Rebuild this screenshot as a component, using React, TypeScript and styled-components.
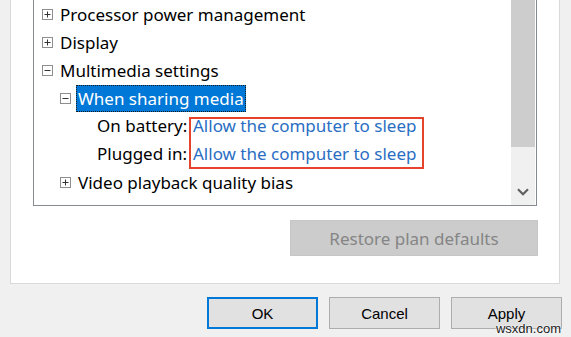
import React from "react";
import styled, { createGlobalStyle } from "styled-components";

const Global = createGlobalStyle`
  html, body { margin: 0; padding: 0; background: #f0f0f0; }
  body { width: 571px; height: 337px; overflow: hidden; font-family: "Noto Sans", "Open Sans", sans-serif; }
`;

const Page = styled.div`
  position: relative;
  width: 571px;
  height: 337px;
  display: flex;
  flex-direction: column;
`;

const Panel = styled.div`
  margin-left: 10px;
  width: 550px;
  height: 284px;
  box-sizing: border-box;
  background: #fff;
  border: 1px solid #d9d9d9;
  border-top: none;
  padding: 0 22px;
  display: flex;
  flex-direction: column;
`;

const TreeBox = styled.div`
  height: 206px;
  box-sizing: border-box;
  border: 1px solid #868a91;
  border-top: none;
  display: flex;
  background: #fff;
`;

const List = styled.div`
  position: relative;
  flex: 1;
  overflow: hidden;
  padding-left: 8px;
`;

const Row = styled.div<{ $level: number }>`
  height: 28px;
  display: flex;
  align-items: center;
  padding-left: ${(p) => p.$level * 18}px;
  font-size: 17px;
  line-height: 28px;
  color: #000;
  white-space: nowrap;
`;

const ToggleBox = styled.svg`
  width: 11px;
  height: 11px;
  flex: none;
  margin-right: 5px;
`;

const Spacer = styled.span`
  width: 16px;
  flex: none;
`;

const Label = styled.span<{ $selected?: boolean }>`
  display: inline-block;
  height: 27px;
  line-height: 27px;
  padding: 0 2px;
  box-sizing: border-box;
  background: ${(p) => (p.$selected ? "#0078d7" : "transparent")};
  color: ${(p) => (p.$selected ? "#fff" : "#000")};
  outline: ${(p) => (p.$selected ? "1px dotted #1a1a1a" : "none")};
  outline-offset: -1px;
`;

const SettingName = styled.span`
  padding-left: 3px;
  width: 96px;
  flex: none;
`;

const LinkValue = styled.span`
  color: #2a6ec3;
`;

const Annotation = styled.div`
  position: absolute;
  left: 155px;
  top: 117px;
  width: 235px;
  height: 52px;
  box-sizing: border-box;
  border: 2px solid #e5432b;
  pointer-events: none;
`;

const ScrollBar = styled.div`
  width: 24px;
  margin-right: 1px;
  display: flex;
  flex-direction: column;
  background: #f0f0f0;
`;

const Thumb = styled.div`
  height: 147px;
  background: #cdcdcd;
`;

const Track = styled.div`
  flex: 1;
  display: flex;
  align-items: flex-end;
  justify-content: center;
  padding-bottom: 9px;
`;

const RestoreRow = styled.div`
  display: flex;
  justify-content: flex-end;
  margin-top: 14px;
  margin-right: -1px;
`;

const RestoreButton = styled.div`
  width: 248px;
  height: 36px;
  box-sizing: border-box;
  background: #cccccc;
  border: 1px solid #c6c6c6;
  color: #858585;
  font-size: 17px;
  display: flex;
  align-items: center;
  justify-content: center;
`;

const ButtonBar = styled.div`
  display: flex;
  justify-content: flex-end;
  gap: 11px;
  margin-top: 13px;
  padding-right: 9px;
`;

const DlgButton = styled.div<{ $default?: boolean }>`
  width: 111px;
  height: 32px;
  box-sizing: border-box;
  background: #e1e1e1;
  border: ${(p) => (p.$default ? "2px solid #0078d7" : "1px solid #adadad")};
  font-family: "Liberation Sans", Arial, sans-serif;
  font-size: 15px;
  color: #000;
  display: flex;
  align-items: center;
  justify-content: center;
`;

const Watermark = styled.div`
  position: absolute;
  right: 10px;
  bottom: 1px;
  font-family: "Liberation Sans", Arial, sans-serif;
  font-size: 13px;
  color: #1a1a1a;
  text-shadow: 0 0 2px #fff, 0 0 2px #fff;
`;

const Toggle = ({ open }: { open: boolean }) => (
  <ToggleBox viewBox="0 0 11 11">
    <rect x="0.5" y="0.5" width="10" height="10" fill="#fff" stroke="#8e8e8e" />
    <path d="M2.5 5.5H8.5" stroke="#333" strokeWidth="1" />
    {!open && <path d="M5.5 2.5V8.5" stroke="#333" strokeWidth="1" />}
  </ToggleBox>
);

type Node =
  | { kind: "group"; level: number; text: string; open: boolean; selected?: boolean }
  | { kind: "setting"; level: number; name: string; value: string };

const nodes: Node[] = [
  { kind: "group", level: 0, text: "Processor power management", open: false },
  { kind: "group", level: 0, text: "Display", open: false },
  { kind: "group", level: 0, text: "Multimedia settings", open: true },
  { kind: "group", level: 1, text: "When sharing media", open: true, selected: true },
  { kind: "setting", level: 2, name: "On battery:", value: "Allow the computer to sleep" },
  { kind: "setting", level: 2, name: "Plugged in:", value: "Allow the computer to sleep" },
  { kind: "group", level: 1, text: "Video playback quality bias", open: false },
  { kind: "group", level: 1, text: "When playing video", open: false },
];

export default function App() {
  return (
    <Page>
      <Global />
      <Panel>
        <TreeBox>
          <List>
            {nodes.map((n, i) =>
              n.kind === "group" ? (
                <Row key={i} $level={n.level}>
                  <Toggle open={n.open} />
                  <Label $selected={n.selected}>{n.text}</Label>
                </Row>
              ) : (
                <Row key={i} $level={n.level}>
                  <Spacer />
                  <SettingName>{n.name}</SettingName>
                  <LinkValue>{n.value}</LinkValue>
                </Row>
              )
            )}
            <Annotation />
          </List>
          <ScrollBar>
            <Thumb />
            <Track>
              <svg width="12" height="8" viewBox="0 0 12 8">
                <path d="M1 1.2L6 6.2L11 1.2" fill="none" stroke="#606060" strokeWidth="2.2" />
              </svg>
            </Track>
          </ScrollBar>
        </TreeBox>
        <RestoreRow>
          <RestoreButton>Restore plan defaults</RestoreButton>
        </RestoreRow>
      </Panel>
      <ButtonBar>
        <DlgButton $default>OK</DlgButton>
        <DlgButton>Cancel</DlgButton>
        <DlgButton>Apply</DlgButton>
      </ButtonBar>
      <Watermark>wsxdn.com</Watermark>
    </Page>
  );
}
